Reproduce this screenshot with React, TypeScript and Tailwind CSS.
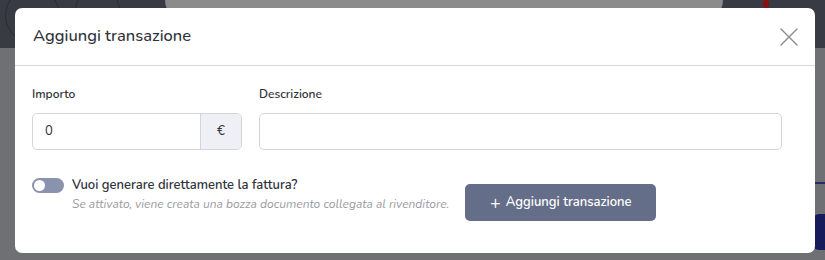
import React from "react";

export default function App() {
  const font = { fontFamily: "Nunito, 'Noto Sans', 'Open Sans', sans-serif" };
  return (
    <div className="relative w-[825px] h-[260px] overflow-hidden bg-[#6f7074]" style={font}>
      {/* background page under overlay */}
      <div className="flex flex-col h-full">
        <div className="h-[48px] bg-[#383b44] flex items-start">
          <div className="ml-[5px] mt-[-12px] w-[55px] h-[55px] rounded-full border border-[#2a2c33]" />
          <div className="ml-[15px] mt-[-12px] w-[45px] h-[45px] rounded-full border border-[#2a2c33]" />
          <div className="ml-[45px] mt-[-20px] w-[558px] h-[40px] rounded-full bg-[#8b8b8c]" />
          <div className="ml-[40px] mt-[0px] w-[6px] h-[8px] rounded-full bg-[#8a1010]" />
        </div>
        <div className="flex-1 flex justify-end">
          <div className="w-[12px] flex flex-col">
            <div className="mt-[134px] h-[2px] bg-[#2a2d62]" />
            <div className="mt-[30px] h-[36px] rounded-l-[6px] bg-[#161b5c]" />
          </div>
        </div>
      </div>

      {/* modal */}
      <div className="absolute left-[15px] top-[8px] w-[800px] h-[245px] bg-white rounded-[7px] flex flex-col">
        <div className="h-[58px] flex items-center justify-between pl-[18px] pr-[16px] border-b border-[#d5d7dc]">
          <span className="text-[16.5px] text-[#30333b] font-medium">Aggiungi transazione</span>
          <svg width="20" height="20" viewBox="0 0 20 20" className="text-[#8a8c90]">
            <path d="M2 2 L18 18 M18 2 L2 18" stroke="currentColor" strokeWidth="1.4" strokeLinecap="round" />
          </svg>
        </div>
        <div className="flex flex-col pl-[17px] pr-[33px] pt-[20px]">
          <div className="flex gap-[17px]">
            <div className="flex flex-col w-[210px]">
              <label className="text-[12px] font-semibold text-[#30333b] leading-[16px] mb-[11px]">Importo</label>
              <div className="flex h-[37px] border border-[#d3d5da] rounded-[5px] overflow-hidden">
                <div className="flex-1 flex items-center pl-[12px] text-[13px] text-[#30333b]">0</div>
                <div className="w-[41px] flex items-center justify-center bg-[#eef0f5] border-l border-[#d3d5da] text-[13px] text-[#30333b]">€</div>
              </div>
            </div>
            <div className="flex flex-col flex-1">
              <label className="text-[12px] font-semibold text-[#30333b] leading-[16px] mb-[11px]">Descrizione</label>
              <div className="h-[37px] border border-[#d3d5da] rounded-[5px]" />
            </div>
          </div>
          <div className="flex items-start mt-[25px]">
            <div className="flex items-start gap-[8px]">
              <div className="mt-[3px] w-[32px] h-[15px] rounded-full bg-[#8a93ad] flex items-center pl-[2px]">
                <div className="w-[11px] h-[11px] rounded-full bg-white" />
              </div>
              <div className="flex flex-col">
                <span className="text-[13px] font-semibold text-[#30333b] leading-[20px]">Vuoi generare direttamente la fattura?</span>
                <span className="text-[12px] italic text-[#9a9ca2] leading-[18px]">Se attivato, viene creata una bozza documento collegata al rivenditore.</span>
              </div>
            </div>
            <button className="ml-[16px] mt-[9px] w-[191px] h-[37px] rounded-[5px] bg-[#646e88] text-white text-[13px] font-semibold flex items-center justify-center gap-[5px]">
              <span className="text-[18px] font-normal leading-none">+</span>
              <span>Aggiungi transazione</span>
            </button>
          </div>
        </div>
      </div>
    </div>
  );
}
